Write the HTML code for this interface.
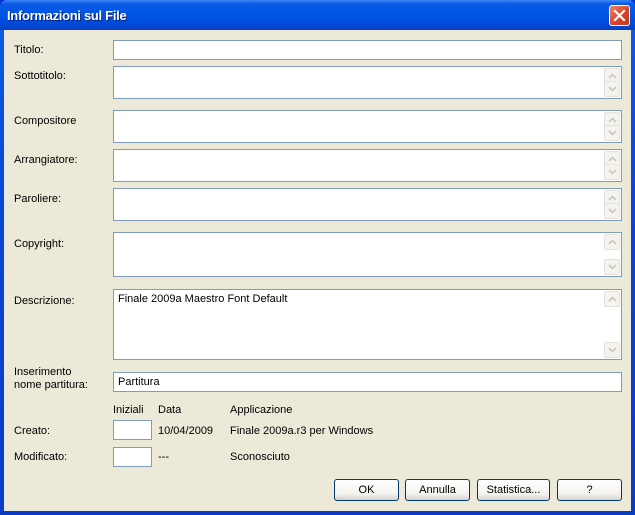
<!DOCTYPE html>
<html><head><meta charset="utf-8"><style>
*{margin:0;padding:0;box-sizing:border-box}
body{width:635px;height:515px;overflow:hidden;font-family:"Liberation Sans",Tahoma,sans-serif;font-size:11px;color:#000;background:#0831d9;white-space:nowrap}
#win{position:absolute;left:0;top:0;width:635px;height:515px;background:linear-gradient(#0a5ee8,#0846d8 40%,#0a3cc8);border-radius:7px 7px 0 0}
#title{position:absolute;left:0;top:0;width:635px;height:30px;border-radius:7px 7px 0 0;background:linear-gradient(#3d8bf5 0%,#0a5ae6 12%,#0055e5 50%,#0048d6 85%,#0a3cba 100%)}
#title span{position:absolute;left:7px;top:8px;color:#fff;font-weight:bold;font-size:13px;letter-spacing:-0.3px;text-shadow:1px 1px #0a1e7a}
#close{position:absolute;left:609px;top:5px;width:21px;height:21px;border:1px solid #fff;border-radius:3px;background:linear-gradient(135deg,#e9896b,#d8432b 55%,#c23a1c)}
#body{position:absolute;left:4px;top:30px;width:627px;height:481px;background:#ece9d8}
#c{position:absolute;left:0;top:0;width:635px;height:515px}
.l{position:absolute;left:14px}
.t{position:absolute}
.f{position:absolute;left:113px;width:509px;background:#fff;border:1px solid #7f9db9}
.sb{position:absolute;right:1px;top:1px;bottom:1px;width:16px}
.ar{position:absolute;left:0;width:16px;height:16px;border:1px solid #e4e2da;border-radius:2px;background:#f4f3ee}
.ar svg{position:absolute;left:3px;top:4px}
.btn{position:absolute;top:479px;height:22px;border:1px solid #003c74;border-radius:3px;background:linear-gradient(#fff,#f4f3ee 70%,#d6d0c5);text-align:center;line-height:20px}
.ib{position:absolute;left:113px;width:39px;height:20px;background:#fff;border:1px solid #7f9db9}
</style></head><body>
<div id="win">
<div id="title"><span>Informazioni sul File</span>
<div id="close"><svg width="19" height="19" viewBox="0 0 19 19"><path d="M5 5L14 14M14 5L5 14" stroke="#fff" stroke-width="2.2" stroke-linecap="square"/></svg></div></div>
<div id="body"></div>
</div>
<div id="c">
<div class="l" style="top:44px">Titolo:</div>
<div class="f" style="top:40px;height:20px"></div>
<div class="l" style="top:70px">Sottotitolo:</div>
<div class="f" style="top:66px;height:33px"><div class="sb"><div class="ar" style="top:0"><svg width="9" height="6"><path d="M1 5L4.5 1.5L8 5" stroke="#c9c7ba" stroke-width="1.6" fill="none"/></svg></div><div class="ar" style="bottom:0"><svg width="9" height="6"><path d="M1 1L4.5 4.5L8 1" stroke="#c9c7ba" stroke-width="1.6" fill="none"/></svg></div></div></div>
<div class="l" style="top:115px">Compositore</div>
<div class="f" style="top:110px;height:33px"><div class="sb"><div class="ar" style="top:0"><svg width="9" height="6"><path d="M1 5L4.5 1.5L8 5" stroke="#c9c7ba" stroke-width="1.6" fill="none"/></svg></div><div class="ar" style="bottom:0"><svg width="9" height="6"><path d="M1 1L4.5 4.5L8 1" stroke="#c9c7ba" stroke-width="1.6" fill="none"/></svg></div></div></div>
<div class="l" style="top:154px">Arrangiatore:</div>
<div class="f" style="top:149px;height:33px"><div class="sb"><div class="ar" style="top:0"><svg width="9" height="6"><path d="M1 5L4.5 1.5L8 5" stroke="#c9c7ba" stroke-width="1.6" fill="none"/></svg></div><div class="ar" style="bottom:0"><svg width="9" height="6"><path d="M1 1L4.5 4.5L8 1" stroke="#c9c7ba" stroke-width="1.6" fill="none"/></svg></div></div></div>
<div class="l" style="top:193px">Paroliere:</div>
<div class="f" style="top:188px;height:33px"><div class="sb"><div class="ar" style="top:0"><svg width="9" height="6"><path d="M1 5L4.5 1.5L8 5" stroke="#c9c7ba" stroke-width="1.6" fill="none"/></svg></div><div class="ar" style="bottom:0"><svg width="9" height="6"><path d="M1 1L4.5 4.5L8 1" stroke="#c9c7ba" stroke-width="1.6" fill="none"/></svg></div></div></div>
<div class="l" style="top:238px">Copyright:</div>
<div class="f" style="top:232px;height:45px"><div class="sb"><div class="ar" style="top:0"><svg width="9" height="6"><path d="M1 5L4.5 1.5L8 5" stroke="#c9c7ba" stroke-width="1.6" fill="none"/></svg></div><div class="ar" style="bottom:0"><svg width="9" height="6"><path d="M1 1L4.5 4.5L8 1" stroke="#c9c7ba" stroke-width="1.6" fill="none"/></svg></div></div></div>
<div class="l" style="top:295px">Descrizione:</div>
<div class="f" style="top:289px;height:71px"><div style="position:absolute;left:4px;top:3px">Finale 2009a Maestro Font Default</div><div class="sb"><div class="ar" style="top:0"><svg width="9" height="6"><path d="M1 5L4.5 1.5L8 5" stroke="#c9c7ba" stroke-width="1.6" fill="none"/></svg></div><div class="ar" style="bottom:0"><svg width="9" height="6"><path d="M1 1L4.5 4.5L8 1" stroke="#c9c7ba" stroke-width="1.6" fill="none"/></svg></div></div></div>
<div class="l" style="top:366px;line-height:13px">Inserimento<br>nome partitura:</div>
<div class="f" style="top:372px;height:20px"><div style="position:absolute;left:4px;top:3px">Partitura</div></div>
<div class="t" style="left:113px;top:404px">Iniziali</div>
<div class="t" style="left:158px;top:404px">Data</div>
<div class="t" style="left:230px;top:404px">Applicazione</div>
<div class="l" style="top:425px">Creato:</div>
<div class="ib" style="top:420px"></div>
<div class="t" style="left:158px;top:425px">10/04/2009</div>
<div class="t" style="left:230px;top:425px">Finale 2009a.r3 per Windows</div>
<div class="l" style="top:451px">Modificato:</div>
<div class="ib" style="top:447px"></div>
<div class="t" style="left:158px;top:451px">---</div>
<div class="t" style="left:230px;top:451px">Sconosciuto</div>
<div class="btn" style="left:334px;width:65px">OK</div>
<div class="btn" style="left:405px;width:65px">Annulla</div>
<div class="btn" style="left:477px;width:73px">Statistica...</div>
<div class="btn" style="left:557px;width:65px">?</div>
</div>
</body></html>
